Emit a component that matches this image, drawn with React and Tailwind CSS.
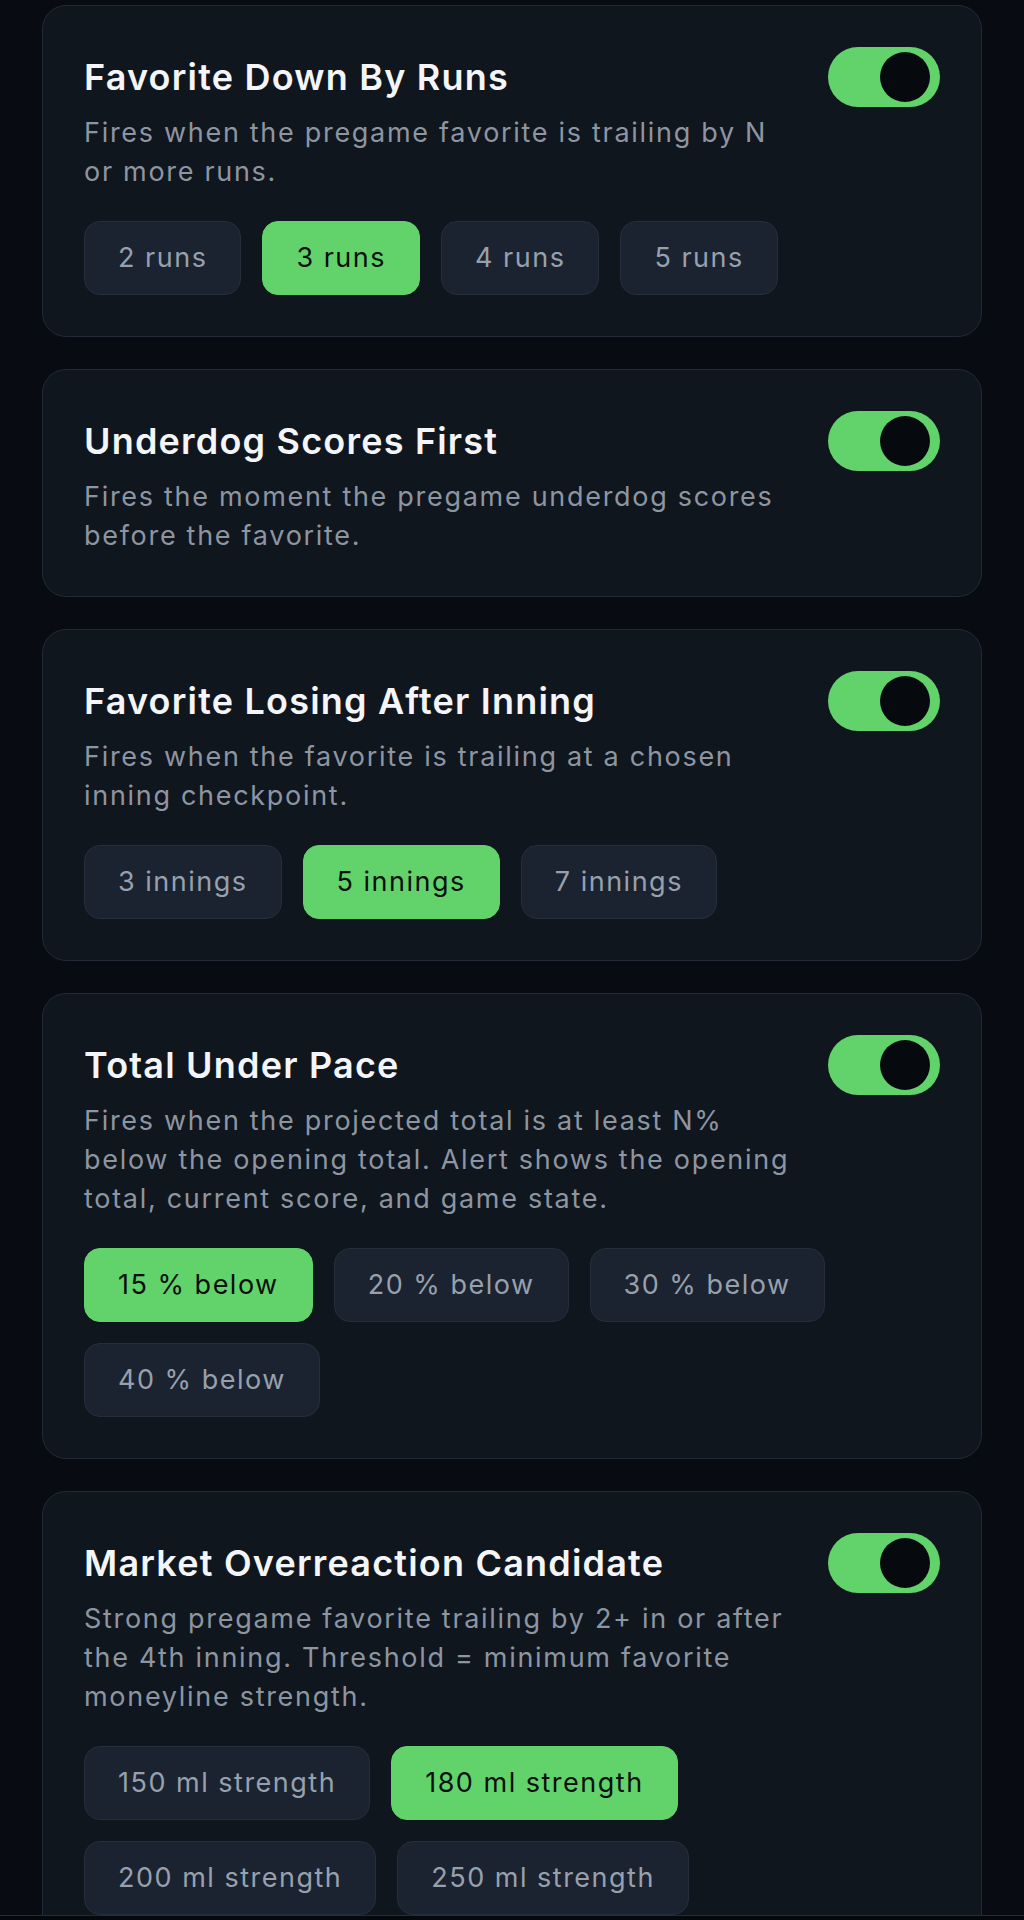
import React, { useState } from "react";

const alerts = [
  {
    title: "Favorite Down By Runs",
    desc: "Fires when the pregame favorite is trailing by N or more runs.",
    options: ["2 runs", "3 runs", "4 runs", "5 runs"],
    selected: 1,
  },
  {
    title: "Underdog Scores First",
    desc: "Fires the moment the pregame underdog scores before the favorite.",
    options: [],
    selected: -1,
  },
  {
    title: "Favorite Losing After Inning",
    desc: "Fires when the favorite is trailing at a chosen inning checkpoint.",
    options: ["3 innings", "5 innings", "7 innings"],
    selected: 1,
  },
  {
    title: "Total Under Pace",
    desc: "Fires when the projected total is at least N% below the opening total. Alert shows the opening total, current score, and game state.",
    options: ["15 % below", "20 % below", "30 % below", "40 % below"],
    selected: 0,
  },
  {
    title: "Market Overreaction Candidate",
    desc: "Strong pregame favorite trailing by 2+ in or after the 4th inning. Threshold = minimum favorite moneyline strength.",
    options: ["150 ml strength", "180 ml strength", "200 ml strength", "250 ml strength"],
    selected: 1,
  },
];

function Toggle({ on, onChange }) {
  return (
    <button
      type="button"
      onClick={onChange}
      className={
        "relative shrink-0 w-[112px] h-[60px] rounded-full " +
        (on ? "bg-[#62d36a]" : "bg-[#2a313c]")
      }
    >
      <span
        className={
          "absolute top-[5px] w-[50px] h-[50px] rounded-full bg-[#060a0f] " +
          (on ? "right-[10px]" : "left-[10px]")
        }
      />
    </button>
  );
}

function AlertCard({ alert }) {
  const [on, setOn] = useState(true);
  const [sel, setSel] = useState(alert.selected);
  return (
    <div className="rounded-[24px] border border-[#232a35] bg-[#10161e] p-[41px]">
      <div className="flex items-center justify-between">
        <h2 className="text-[36px] leading-[44px] font-semibold text-[#f3f5f8] tracking-[1.2px]">
          {alert.title}
        </h2>
        <Toggle on={on} onChange={() => setOn(!on)} />
      </div>
      <p className="mt-[6px] pr-[148px] text-[27px] leading-[39px] tracking-[1.7px] text-[#8d95a1]">
        {alert.desc}
      </p>
      {alert.options.length > 0 && (
        <div className="mt-[30px] flex flex-wrap gap-[21px]">
          {alert.options.map((opt, i) => (
            <button
              key={opt}
              type="button"
              onClick={() => setSel(i)}
              className={
                "h-[74px] px-[33px] rounded-[16px] text-[27px] tracking-[1.5px] border " +
                (i === sel
                  ? "bg-[#62d36a] border-[#62d36a] text-[#0a0f0c]"
                  : "bg-[#1c2330] border-[#262e3b] text-[#97a0ad]")
              }
            >
              {opt}
            </button>
          ))}
        </div>
      )}
    </div>
  );
}

export default function App() {
  return (
    <div
      className="h-[1920px] flex flex-col bg-[#080c12] overflow-hidden"
      style={{ fontFamily: "Inter, 'Noto Sans', sans-serif" }}
    >
      <div className="flex-1 overflow-hidden px-[42px] pt-[5px] flex flex-col gap-[32px]">
        {alerts.map((a) => (
          <AlertCard key={a.title} alert={a} />
        ))}
      </div>
      <div className="h-[5px] shrink-0 border-t border-[#252c36] bg-[#05080c]" />
    </div>
  );
}
